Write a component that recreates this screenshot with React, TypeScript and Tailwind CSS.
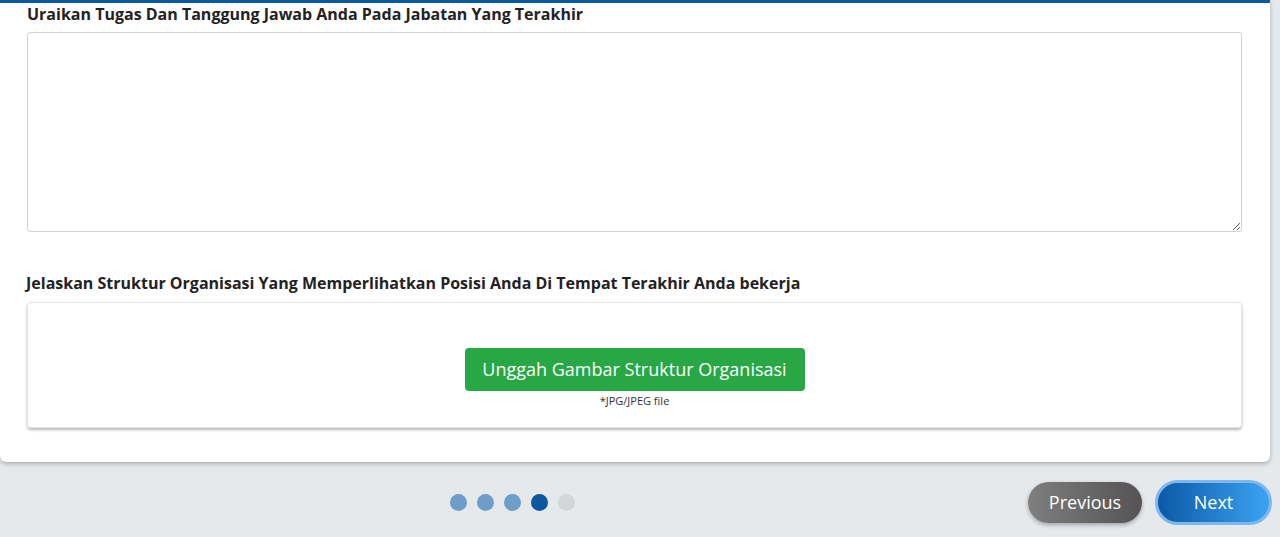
import React from "react";

const Dots = ({ active }: { active: number }) => {
  const items = [0, 1, 2, 3, 4];
  return (
    <div className="flex items-center gap-[10px]">
      {items.map((i) => (
        <span
          key={i}
          className={
            i === active
              ? "w-[17px] h-[17px] rounded-full bg-[#0b57a0]"
              : i < active
              ? "w-[17px] h-[17px] rounded-full bg-[#6e9dc9]"
              : "w-[17px] h-[17px] rounded-full bg-[#d4d6d9]"
          }
        />
      ))}
    </div>
  );
};

const App = () => {
  return (
    <div
      className="w-[1280px] h-[537px] bg-[#e6e9ec] flex flex-col overflow-hidden"
      style={{ fontFamily: '"Open Sans", "Noto Sans", sans-serif' }}
    >
      <div className="mr-[10px] bg-white border-t-[3px] border-[#0b5aa0] rounded-b-[6px] shadow-[0_2px_4px_rgba(0,0,0,0.25)] pl-[27px] pr-[28px] pt-[1px] pb-[34px]">
        <label className="block text-[16px] font-bold text-[#222] leading-[20px] mb-[8px]">
          Uraikan Tugas Dan Tanggung Jawab Anda Pada Jabatan Yang Terakhir
        </label>
        <textarea className="block w-full h-[200px] border border-[#cfd2d6] rounded-[3px] resize-y outline-none" />

        <label className="block mt-[41px] text-[16px] font-bold text-[#222] leading-[20px] mb-[9px] -ml-px">
          Jelaskan Struktur Organisasi Yang Memperlihatkan Posisi Anda Di Tempat Terakhir Anda bekerja
        </label>
        <div className="h-[126px] border border-[#e2e4e6] rounded-[4px] shadow-[0_2px_3px_rgba(0,0,0,0.28)] flex flex-col items-center pt-[45px]">
          <button className="h-[43px] w-[340px] bg-[#28a745] rounded-[4px] text-white text-[18px] leading-[43px]">
            Unggah Gambar Struktur Organisasi
          </button>
          <span className="text-[11px] text-[#333] leading-[16px] mt-[2px]">*JPG/JPEG file</span>
        </div>
      </div>

      <div className="flex-1 flex items-center pt-[5px]">
        <div className="w-[1025px] flex justify-center">
          <Dots active={3} />
        </div>
        <button className="ml-[3px] w-[114px] h-[41px] rounded-full bg-gradient-to-r from-[#7f7f7f] to-[#555353] text-white text-[18px] shadow-[0_2px_4px_rgba(0,0,0,0.3)]">
          Previous
        </button>
        <button className="ml-[13px] w-[117px] h-[45px] rounded-full bg-gradient-to-r from-[#0a5aa6] to-[#3ba3f2] border-[3px] border-[#7fb8ee] text-white text-[18px]">
          Next
        </button>
      </div>
    </div>
  );
};

export default App;
